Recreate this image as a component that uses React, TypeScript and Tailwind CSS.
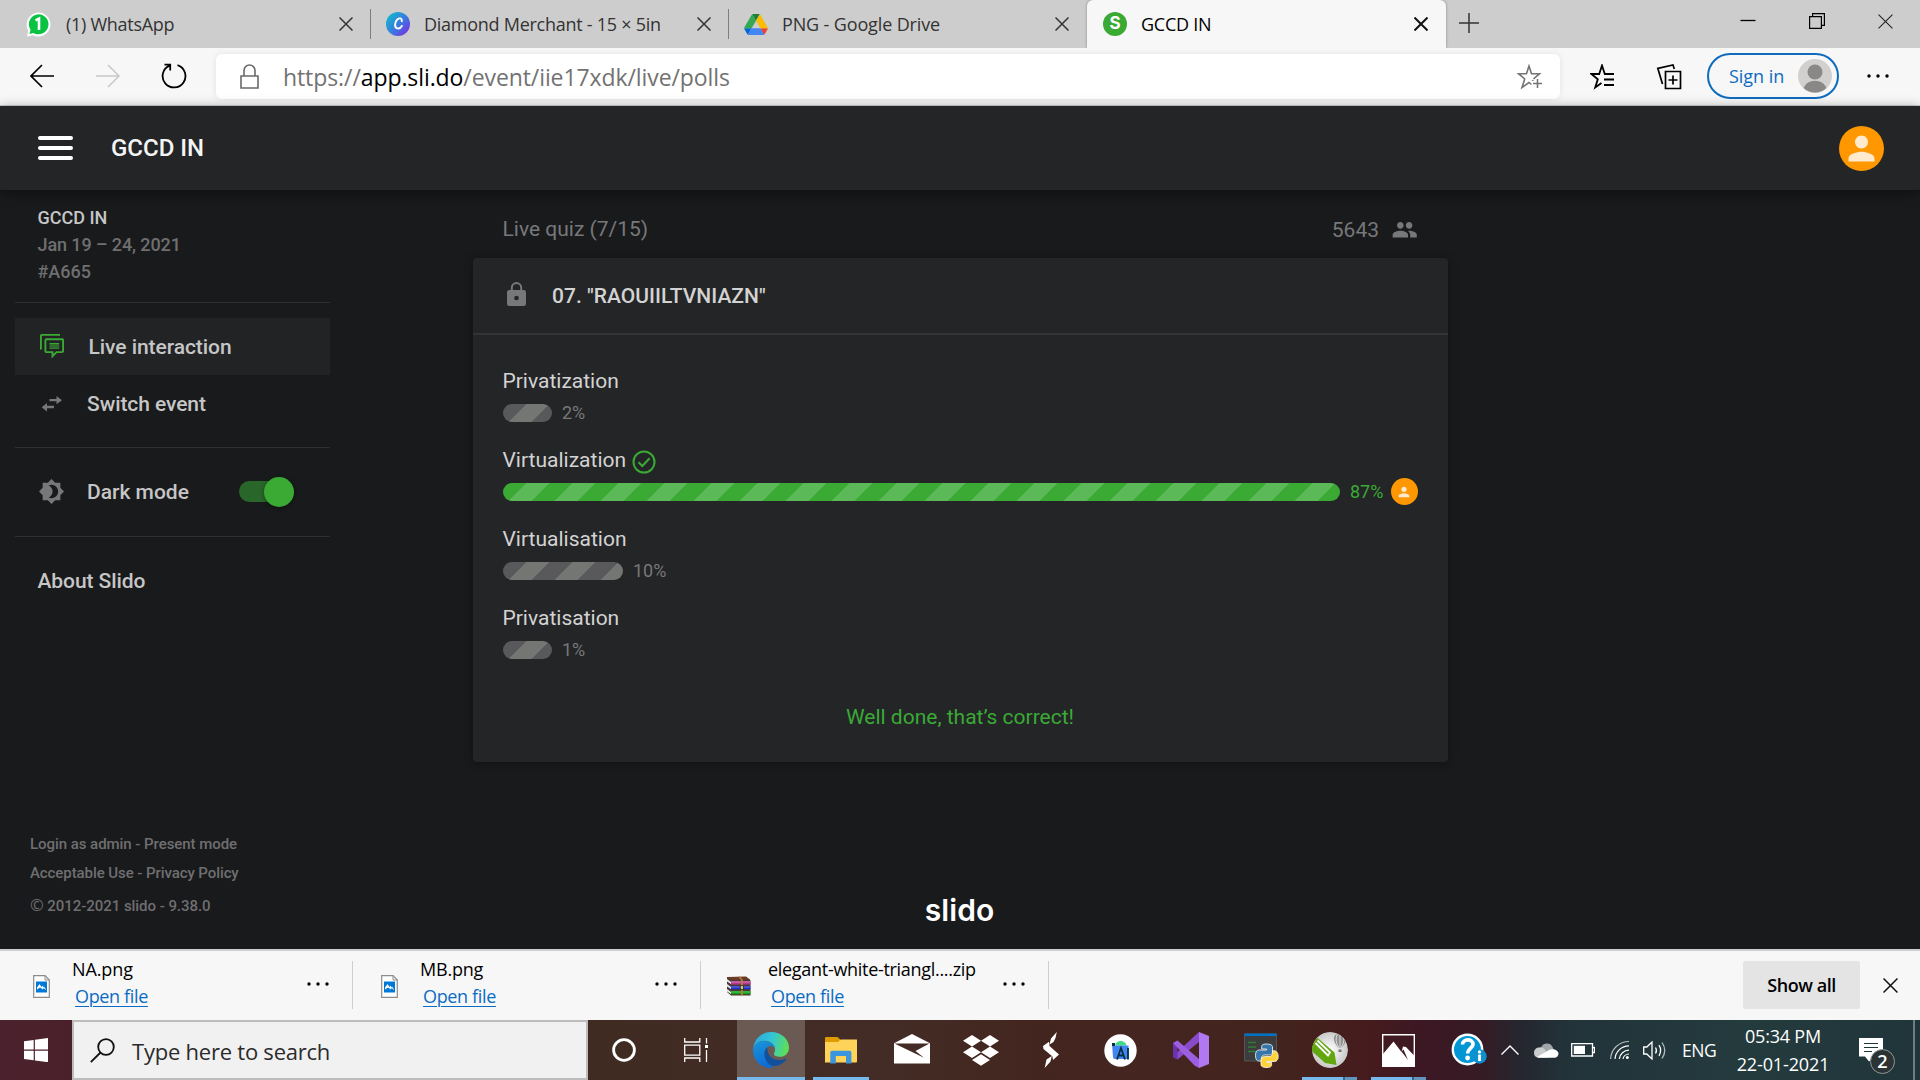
import React from "react";

type Kids = { children?: React.ReactNode };

function Close({ size = 14, w = 1.5, color = "#333" }: { size?: number; w?: number; color?: string }) {
  return (
    <svg width={size} height={size} viewBox="0 0 14 14" fill="none" stroke={color} strokeWidth={w}>
      <path d="M0.5 0.5 13.5 13.5M13.5 0.5 0.5 13.5" />
    </svg>
  );
}

function Dots() {
  return (
    <svg width="22" height="4" viewBox="0 0 22 4" fill="#000">
      <circle cx="2" cy="2" r="1.7" />
      <circle cx="11" cy="2" r="1.7" />
      <circle cx="20" cy="2" r="1.7" />
    </svg>
  );
}

function Person({ size }: { size: number }) {
  return (
    <svg width={size} height={size} viewBox="0 0 24 24" fill="#ffeace">
      <path d="M12 12c2.21 0 4-1.79 4-4s-1.79-4-4-4-4 1.79-4 4 1.79 4 4 4zm0 2c-2.67 0-8 1.34-8 4v2h16v-2c0-2.66-5.33-4-8-4z" />
    </svg>
  );
}

function TabBar() {
  return (
    <div className="flex h-12 items-stretch bg-[#cdcdcd] font-['Open_Sans',sans-serif] text-[18px] text-[#333]">
      <div className="flex h-12 w-[370px] items-center pl-[26px]">
        <svg width="25" height="25" viewBox="0 0 25 25">
          <path d="M12.5 0.5A12 12 0 1 1 7 23.200L1 24.500 2.200 18.500A12 12 0 0 1 12.500 0.500z" fill="#fff" />
          <path d="M12.700 2.300a10 10 0 1 1-5.300 18.600L3.500 22l1-4.300A10 10 0 0 1 12.700 2.300z" fill="#0ac242" />
          <path d="M9.500 8.300 13 6.600V18" fill="none" stroke="#fff" strokeWidth="2.600" />
        </svg>
        <span className="ml-[15px] tracking-[-0.28px]">(1) WhatsApp</span>
        <span className="ml-auto mr-[17px]"><Close /></span>
      </div>
      <div className="my-auto h-[30px] w-px bg-[#7d7d7d]" />
      <div className="flex h-12 w-[357px] items-center pl-[15px]">
        <svg width="24" height="24" viewBox="0 0 24 24">
          <defs>
            <linearGradient id="cv" x1="0.1" y1="0.2" x2="0.9" y2="0.9">
              <stop offset="0" stopColor="#14b2cf" />
              <stop offset="0.5" stopColor="#3a7be0" />
              <stop offset="1" stopColor="#7334e2" />
            </linearGradient>
          </defs>
          <circle cx="12" cy="12" r="12" fill="url(#cv)" />
          <path d="M15.800 9.200c.3-3-2.300-3.700-4.500-1.700-2.600 2.400-3.400 8 .1 8.900 1.900.4 3.700-.9 4.500-2.500" fill="none" stroke="#fff" strokeWidth="1.900" strokeLinecap="round" />
        </svg>
        <span className="ml-[14px] tracking-[-0.26px]">Diamond Merchant - 15 × 5in</span>
        <span className="ml-auto mr-[17px]"><Close /></span>
      </div>
      <div className="my-auto h-[30px] w-px bg-[#7d7d7d]" />
      <div className="flex h-12 w-[358px] items-center rounded-br-md pl-[15px]">
        <svg width="24" height="21" viewBox="0 0 87.300 78">
          <path d="m6.600 66.850 3.850 6.650c.8 1.400 1.950 2.500 3.300 3.300l13.750-23.800h-27.500c0 1.550.4 3.100 1.200 4.500z" fill="#0066da" />
          <path d="m43.650 25-13.750-23.800c-1.350.8-2.500 1.900-3.300 3.300l-25.400 44a9.060 9.060 0 0 0 -1.200 4.500h27.500z" fill="#34a853" />
          <path d="m73.550 76.800c1.350-.8 2.500-1.900 3.300-3.300l1.600-2.750 7.650-13.250c.8-1.400 1.200-2.950 1.200-4.500h-27.502l5.852 11.500z" fill="#ea4335" />
          <path d="m43.650 25 13.750-23.800c-1.350-.8-2.900-1.200-4.500-1.200h-18.500c-1.600 0-3.150.45-4.500 1.200z" fill="#188038" />
          <path d="m59.800 53h-32.300l-13.750 23.800c1.350.8 2.900 1.200 4.500 1.200h50.800c1.600 0 3.150-.45 4.500-1.200z" fill="#4285f4" />
          <path d="m73.400 26.500-12.700-22c-.8-1.400-1.950-2.500-3.300-3.300l-13.750 23.800 16.150 28h27.450c0-1.550-.4-3.100-1.200-4.500z" fill="#fbbc04" />
        </svg>
        <span className="ml-[14px] tracking-[-0.14px]">PNG - Google Drive</span>
        <span className="ml-auto mr-[18px]"><Close /></span>
      </div>
      <div className="flex h-12 w-[359px] items-center rounded-t-md bg-[#f7f7f7] pl-4 text-black shadow-[0_0_3px_rgba(0,0,0,0.35)] [clip-path:inset(0_-4px_0_-4px)]">
        <div className="flex size-6 items-center justify-center rounded-full bg-[#3aaa35] font-['Inter',sans-serif] text-[17px] font-bold text-white">S</div>
        <span className="ml-[14px] tracking-[-0.25px]">GCCD IN</span>
        <span className="ml-auto mr-[18px]"><Close w={2} color="#111" /></span>
      </div>
      <div className="flex w-[46px] items-center justify-center pb-0.5">
        <svg width="20" height="20" viewBox="0 0 20 20" stroke="#333" strokeWidth="1.500"><path d="M0 10H20M10 0V20" /></svg>
      </div>
      <div className="ml-auto flex items-center gap-[53px] pb-[6px] pr-[27px]">
        <svg width="16" height="16" viewBox="0 0 16 16" stroke="#000" strokeWidth="1.300"><path d="M0.500 7.500H15.500" /></svg>
        <svg width="16" height="16" viewBox="0 0 16 16" fill="none" stroke="#000" strokeWidth="1.200">
          <path d="M0.600 3.600H12.400V15.400H0.600zM3.600 3.600V0.600H15.400V12.400H12.400" />
        </svg>
        <Close size={15} w={1} color="#222" />
      </div>
    </div>
  );
}

function Toolbar() {
  return (
    <div className="flex h-[58px] items-center border-b border-[#cfcfcf] bg-[#f7f7f7] font-['Open_Sans',sans-serif]">
      <svg className="-mt-0.5 ml-[30px]" width="24" height="24" viewBox="0 0 24 24" fill="none" stroke="#000" strokeWidth="1.700"><path d="M24 12H1M12 1 1 12 12 23" /></svg>
      <svg className="-mt-0.5 ml-[42px]" width="24" height="24" viewBox="0 0 24 24" fill="none" stroke="#c8c8c8" strokeWidth="1.500"><path d="M0 12H23M12 1 23 12 12 23" /></svg>
      <svg className="-mt-0.5 ml-[41px]" width="26" height="26" viewBox="0 0 26 26" fill="none" stroke="#000" strokeWidth="1.800">
        <path d="M16.500 2.200A11.400 11.400 0 1 1 8.500 2.600M3.500 1.600H9.200V7.600" />
      </svg>
      <div className="ml-[29px] flex h-[45px] w-[1344px] items-center rounded-[6px] bg-white pl-6 pr-[17px] shadow-[0_0_6px_rgba(0,0,0,0.09)]">
        <svg width="19" height="25" viewBox="0 0 19 25" fill="none" stroke="#6a6a6a" strokeWidth="1.600">
          <path d="M1 12H18V24H1zM4 12V6.500a5.500 5.500 0 0 1 11 0V12" />
        </svg>
        <span className="ml-6 mt-0.5 whitespace-nowrap text-[23px] tracking-[-0.09px] text-[#727272]">
          https://<span className="text-black">app.sli.do</span>/event/iie17xdk/live/polls
        </span>
        <svg className="ml-auto" width="26" height="26" viewBox="0 0 26 26" fill="none" stroke="#757575" strokeWidth="1.600">
          <path d="M15.500 16 16 17M14.500 20.500 12 18.500 5 23.500 7.700 15 1.500 9.700H9.500L12 2 14.500 9.700H22.500L16.500 15M20.500 15V24M16 19.500H25" />
        </svg>
      </div>
      <svg className="ml-[30px]" width="26" height="26" viewBox="0 0 26 26" fill="none" stroke="#000" strokeWidth="1.800">
        <path d="M24 10H14.800L12 1.500 9.200 10H1.500L7.800 15.200 5.200 23.500 11.500 19M14 15.500H24M14 21H24" />
      </svg>
      <svg className="ml-10" width="26" height="26" viewBox="0 0 26 26" fill="none" stroke="#000" strokeWidth="1.700">
        <path d="M9.500 7.500H24.500V24.500H9.500zM17 11.500V20.500M12.500 16H21.500M6.500 20 1.800 4.300 17 1 18.300 5" />
      </svg>
      <div className="-mt-px ml-[25px] flex h-[46px] w-[132px] items-center rounded-full border-2 border-[#0f6cbd] pl-5 text-[18px] text-[#0f6cbd]">
        <span className="tracking-[-0.05px]">Sign in</span>
        <svg className="ml-auto mr-[5px]" width="34" height="34" viewBox="0 0 34 34">
          <defs><clipPath id="av"><circle cx="17" cy="17" r="16.500" /></clipPath></defs>
          <circle cx="17" cy="17" r="17" fill="#d2d0ce" />
          <g clipPath="url(#av)" fill="#8a8886">
            <circle cx="17" cy="13" r="7.500" />
            <path d="M5 33C5 18 29 18 29 33V34H5z" />
          </g>
        </svg>
      </div>
      <span className="-mt-0.5 ml-[28px] flex"><Dots /></span>
    </div>
  );
}

function Rule() {
  return <div className="h-px w-[315px] bg-[#2e2f31]" />;
}

function Sidebar() {
  return (
    <aside className="flex w-[473px] flex-col pl-[15px] font-['Roboto',sans-serif] font-medium text-[#c6c6c6]">
      <div className="mt-[14px] pl-[22.500px] text-[18px] leading-[27px]">
        <div>GCCD IN</div>
        <div className="tracking-[-0.1px] text-[#6f6f70]">Jan 19 – 24, 2021</div>
        <div className="text-[#6f6f70]">#A665</div>
      </div>
      <div className="mt-[17px]"><Rule /></div>
      <div className="mt-[15px] flex h-[57px] w-[315px] items-center bg-[#222325] pl-[25px] text-[21px]">
        <svg className="-mt-0.5" width="24" height="24" viewBox="0 0 24 24" fill="none" stroke="#3aaa35" strokeWidth="1.900">
          <path d="M0.900 15.500V1.900q0-1 1-1H20" />
          <path d="M6.500 5.300H22q1.100 0 1.100 1.100V17q0 1.100-1.100 1.100H16.500L12.500 22.200V18.100H6.500q-1.100 0-1.100-1.100V6.400q0-1.100 1.100-1.100z" />
          <path d="M9.500 9.500H19.200M9.500 14.200H19.200" strokeWidth="1" />
          <path d="M9.500 11.800H19.200" strokeWidth="3.600" strokeOpacity="0.550" />
        </svg>
        <span className="ml-[24.500px] mt-0.5 tracking-[-0.06px]">Live interaction</span>
      </div>
      <div className="flex h-[57px] w-[315px] items-center pl-[26px] text-[21px]">
        <svg width="22" height="16" viewBox="0 0 22 16" fill="#77787a">
          <path d="M8.500 3.100H15.500V0L21 4.200 15.500 8.300V5.300H8.500zM13 9.700H6V7L0.700 11.300 6 15.500V12.200H13z" />
        </svg>
        <span className="ml-[24px] mt-0.5 tracking-[-0.08px]">Switch event</span>
      </div>
      <div className="mt-[15px]"><Rule /></div>
      <div className="mt-[15px] flex h-[57px] w-[315px] items-center pl-6 text-[21px]">
        <svg width="25" height="25" viewBox="0.700 0.700 22.600 22.600" fill="#77787a">
          <path fillRule="evenodd" d="M20 8.690V4h-4.690L12 .69 8.690 4H4v4.690L.69 12 4 15.310V20h4.690L12 23.310 15.310 20H20v-4.690L23.310 12 20 8.690zM12 18c-.89 0-1.740-.2-2.500-.55C11.560 16.500 13 14.420 13 12s-1.440-4.500-3.500-5.450C10.260 6.200 11.110 6 12 6c3.310 0 6 2.690 6 6s-2.690 6-6 6z" />
        </svg>
        <span className="ml-[23px] mt-0.5">Dark mode</span>
        <div className="ml-auto mr-9 flex h-[21px] w-[55px] items-center justify-end rounded-full bg-[#296629]">
          <div className="size-[30px] shrink-0 rounded-full bg-[#3aaa35] shadow-[0_1px_4px_rgba(0,0,0,0.4)]" />
        </div>
      </div>
      <div className="mt-4"><Rule /></div>
      <div className="mt-[28px] pl-[22.500px] text-[21px] leading-[32px] tracking-[-0.08px]">About Slido</div>
      <div className="mb-[31px] mt-auto pl-[15px] text-[15px] leading-[24px] tracking-[-0.05px] text-[#6f6f70]">
        <div>Login as admin - Present mode</div>
        <div className="mt-[5px] tracking-[-0.08px]">Acceptable Use - Privacy Policy</div>
        <div className="mt-[9px]"><span className="font-['Open_Sans',sans-serif] text-[16.500px] font-normal leading-none">©</span> 2012-2021 slido - 9.38.0</div>
      </div>
    </aside>
  );
}

function Option({ label, pct, width, correct }: { label: string; pct: string; width: number; correct?: boolean }) {
  return (
    <div className="h-[79px]">
      <div className="flex h-8 items-center text-[21px] text-[#d3d3d3]">
        <span className="mt-[3px]">{label}</span>
        {correct && (
          <svg className="ml-[6px] mt-[5px]" width="24" height="24" viewBox="0 0 24 24" fill="none" stroke="#3aaa35" strokeWidth="2">
            <circle cx="12" cy="12" r="10.500" />
            <path d="M6.500 12.300 10.300 16 17.600 8.200" />
          </svg>
        )}
      </div>
      <div className="mt-[3px] flex h-[27px] items-center">
        <div
          className={
            correct
              ? "h-[18px] rounded-full bg-[repeating-linear-gradient(135deg,#3aaa35_0px,#3aaa35_16.35px,#5bba57_16.35px,#5bba57_32.7px)]"
              : "h-[18px] rounded-full bg-[repeating-linear-gradient(135deg,#59595b_0px,#59595b_16.35px,#747674_16.35px,#747674_32.7px)]"
          }
          style={{ width }}
        />
        <span className={correct ? "ml-[10.500px] text-[18px] text-[#3aaa35]" : "ml-[10.500px] text-[18px] text-[#77787a]"}>{pct}</span>
        {correct && (
          <div className="ml-[7.500px] flex size-[27px] items-center justify-center rounded-full bg-[#ff9800]">
            <Person size={16} />
          </div>
        )}
      </div>
    </div>
  );
}

function Poll() {
  return (
    <main className="flex w-[975px] flex-col font-['Roboto',sans-serif]">
      <div className="mt-6 flex h-8 items-center justify-between pl-[29.500px] pr-[30px] text-[21px] text-[#77787a]">
        <span>Live quiz (7/15)</span>
        <div className="flex items-center gap-[13px]">
          <span className="mt-px">5643</span>
          <svg className="-mt-px" width="26" height="17" viewBox="0.500 4 23.500 15.500" fill="#77787a">
            <path d="M16 11c1.660 0 2.990-1.340 2.990-3S17.660 5 16 5s-3 1.340-3 3 1.340 3 3 3zm-8 0c1.660 0 2.990-1.340 2.990-3S9.660 5 8 5 5 6.340 5 8s1.340 3 3 3zm0 2c-2.330 0-7 1.170-7 3.500V19h14v-2.500c0-2.330-4.670-3.500-7-3.500zm8 0c-.29 0-.62.020-.97.050 1.160.84 1.970 1.970 1.970 3.450V19h6v-2.500c0-2.330-4.670-3.500-7-3.500z" />
          </svg>
        </div>
      </div>
      <section className="mt-3 h-[504px] rounded-[4px] bg-[#242527] shadow-[0_1px_8px_rgba(0,0,0,0.35)]">
        <div className="flex h-[77px] items-center border-b-2 border-[#333436] pl-[34px]">
          <svg className="-mt-[3px]" width="19" height="24" viewBox="0 0 19 24" fill="#77787a">
            <path fillRule="evenodd" d="M2.300 8H3.800V5.700a5.700 5.700 0 0 1 11.400 0V8h1.500A2.300 2.300 0 0 1 19 10.300V21.700A2.300 2.300 0 0 1 16.700 24H2.300A2.300 2.300 0 0 1 0 21.700V10.300A2.300 2.300 0 0 1 2.300 8zM5.800 8h7.400V5.700a3.700 3.700 0 0 0-7.400 0zM9.500 13.700a2.300 2.300 0 1 0 0 4.600a2.300 2.300 0 0 0 0-4.600z" />
          </svg>
          <span className="ml-[26px] mt-0.5 text-[21px] font-medium tracking-[0.02px] text-[#d3d3d3]">07. "RAOUIILTVNIAZN"</span>
        </div>
        <div className="pl-[29.500px] pt-[29px]">
          <Option label="Privatization" pct="2%" width={49} />
          <Option label="Virtualization" pct="87%" width={837} correct />
          <Option label="Virtualisation" pct="10%" width={120} />
          <Option label="Privatisation" pct="1%" width={49} />
        </div>
        <div className="mt-[21px] pr-px text-center text-[21px] leading-8 text-[#3aaa35]">Well done, that’s correct!</div>
      </section>
      <div className="mb-[19px] mt-auto pr-0.5 text-center font-['Inter',sans-serif] text-[30px] font-semibold leading-[40px] tracking-[0.1px] text-white">slido</div>
    </main>
  );
}

function Download({ name, icon, cls }: { name: string; icon: React.ReactNode; cls?: string }) {
  return (
    <div className="flex h-full items-center">
      <div className="flex w-[72px] justify-start pl-[33px] pt-0.5">{icon}</div>
      <div className="-mt-[5px] w-[235px] text-[18px] leading-[27px]">
        <div className={cls}>{name}</div>
        <div className="pl-[3px]"><span className="tracking-[-0.35px] text-[#0b6cc4] underline decoration-1 underline-offset-[3px]">Open file</span></div>
      </div>
      <span className="-mt-0.5 flex"><Dots /></span>
      <div className="ml-[23px] h-12 w-px bg-[#cfcfcf]" />
    </div>
  );
}

function ImageFile() {
  return (
    <svg width="17" height="23" viewBox="0 0 17 23">
      <path d="M0.700 0.700H12L16.300 5V22.300H0.700z" fill="#fff" stroke="#8c8c8c" strokeWidth="1.200" />
      <path d="M12 0.700V5H16.300" fill="none" stroke="#8c8c8c" />
      <path d="M3 6.500H14V17.500H3z" fill="#0078d7" />
      <path d="M4 14.500V12.500L6.500 9 8.500 12 10 10.500V12.500L11 11.500 13 14.500V15L10.500 13 10 14.500 7 12.500z" fill="#fff" />
    </svg>
  );
}

function ZipFile() {
  return (
    <svg className="-ml-[3px]" width="25" height="20" viewBox="0 0 25 20">
      <path d="M1 1H20L24.500 4.500V19.500H5L1 16z" fill="#4a3a34" />
      <path d="M1 1 20 0.500 24.500 4H5z" fill="#6b3a28" />
      <path d="M5 5H24.500V8.500H5z" fill="#b8388f" />
      <path d="M5 10H24.500V13.200H5z" fill="#1c2fd0" />
      <path d="M5 15H24.500V18.200H5z" fill="#12a016" />
      <path d="M5 6H24.500M5 11H24.500M5 16H24.500" stroke="#fff" strokeOpacity="0.350" />
      <path d="M1 3 5 6V8L1 5.500zM1 8 5 11V13L1 10.500zM1 13 5 16V18L1 15.500z" fill="#e8e8e8" />
      <path d="M12 0.500 15 4V19.500H16.800V4L14 0.500z" fill="#b5803a" />
      <path d="M14.300 9.500H17.500V13.500H14.300z" fill="#e0c070" stroke="#222" strokeWidth="0.800" />
    </svg>
  );
}

function Downloads() {
  return (
    <div className="flex h-[71px] items-center border-t-2 border-[#cfcfcf] bg-[#f7f7f7] pb-px font-['Open_Sans',sans-serif] text-black">
      <Download name="NA.png" icon={<ImageFile />} cls="tracking-[-0.1px]" />
      <div className="-ml-[5px]"><Download name="MB.png" icon={<ImageFile />} cls="tracking-[-0.2px]" /></div>
      <div className="-ml-[5px]"><Download name="elegant-white-triangl....zip" icon={<ZipFile />} cls="tracking-[-0.3px]" /></div>
      <div className="ml-auto flex h-12 w-[117px] items-center justify-center rounded-[2px] bg-[#e4e4e4] text-[18px] font-semibold tracking-[-0.45px]">Show all</div>
      <span className="ml-[23px] mr-[22px] flex"><Close size={15} w={1.4} color="#111" /></span>
    </div>
  );
}

function Task({ children }: Kids) {
  return <div className="flex h-[60px] w-[70px] items-center justify-center">{children}</div>;
}

function Taskbar() {
  return (
    <div className="flex h-[60px] items-center bg-[linear-gradient(90deg,#4b212d_0px,#4a212b_72px,#402b23_588px,#432c25_900px,#43251f_1040px,#45251f_1150px,#43231d_1290px,#461b1d_1370px,#3c1824_1420px,#361b24_1480px,#25262f_1520px,#22333a_1570px,#243b3e_1750px,#20353a_1920px)] font-['Open_Sans',sans-serif] text-white">
      <div className="flex h-full w-[72px] items-center justify-center">
        <svg width="24" height="24" viewBox="0 0 24 24" fill="#fff">
          <path d="M0 3.300 9.700 2V11.500H0zM10.900 1.800 24 0V11.500H10.900zM0 12.700H9.700V22.200L0 20.900zM10.900 12.700H24V24.200L10.900 22.400z" />
        </svg>
      </div>
      <div className="flex h-[60px] w-[516px] items-center border-2 border-[#bcbcbc] bg-[#f1f1f1] pl-4 text-[22px] text-[#2b2b2b]">
        <svg width="25" height="25" viewBox="0 0 25 25" fill="none" stroke="#111" strokeWidth="1.800">
          <circle cx="16" cy="9" r="7.800" />
          <path d="M10.500 14.500 0.800 24.200" />
        </svg>
        <span className="ml-[17px] mt-0.5 tracking-[-0.23px]">Type here to search</span>
      </div>
      <div className="flex h-full w-[71px] items-center justify-center">
        <svg width="26" height="26" viewBox="0 0 26 26" fill="none" stroke="#fff" strokeWidth="2.800"><circle cx="13" cy="13" r="10.400" /></svg>
      </div>
      <div className="flex h-full w-[78px] items-center justify-start pl-[25px]">
        <svg width="25" height="24" viewBox="0 0 25 24" fill="none" stroke="#fff" strokeWidth="1.300">
          <path d="M0.700 0V4H15.800V0M0.700 7.200H15.800V17.200H0.700zM0.700 24V20H15.800V24M22.500 0V5.500M22.500 12V24" />
          <path d="M21 7H24V10H21z" fill="#fff" stroke="none" />
        </svg>
      </div>
      <div className="flex h-full w-[68px] items-center justify-center border-b-[3px] border-[#76b9ed] bg-[#6b5a53]">
        <svg className="mt-[3px]" width="36" height="36" viewBox="0 0 36 36">
          <defs>
            <linearGradient id="e1" x1="0" y1="0.300" x2="1" y2="0.500">
              <stop offset="0" stopColor="#2ba9e1" />
              <stop offset="0.500" stopColor="#33c6d5" />
              <stop offset="1" stopColor="#5fdf52" />
            </linearGradient>
            <linearGradient id="e2" x1="0" y1="0" x2="0.300" y2="1">
              <stop offset="0" stopColor="#1a97d8" />
              <stop offset="1" stopColor="#0d6cd6" />
            </linearGradient>
          </defs>
          <path d="M0.300 16C1.500 6.500 9 0 18 0 28.500 0 36 7.500 36 15.500 36 21.500 31.500 24.800 27 24.800 22.500 24.800 20.500 23 21 21.500 21.500 20 22.300 19 22 17 21.500 12 16.500 8.700 11 8.700 6 8.700 2 12 0.300 16z" fill="url(#e1)" />
          <path d="M0.300 16C2 11.500 6 9 11 9 17 9 21.500 12.500 22 16.500 20.500 14 17.500 13.500 15.500 14.500 11.500 16.500 10.500 22 13 27 15.500 32 20 35.500 21 35.700 10 37.500 -1.500 29 0.300 16z" fill="url(#e2)" />
          <path d="M14.500 15.200C9.500 19 11 27.500 16 32 21 36.500 29.500 33 33.300 27.300 33.600 26.700 33 26.300 32.500 26.600 24 31 13 25.500 14.500 15.200z" fill="#12509e" />
        </svg>
      </div>
      <div className="flex h-full w-[72px] justify-center">
        <div className="flex h-full w-14 items-center justify-center border-b-[3px] border-[#76b9ed]">
          <svg className="mt-[3px]" width="32" height="27" viewBox="0 0 32 27">
            <path d="M0 1.200Q0 0 1.200 0H12.500L15 2.300V6H0z" fill="#e09b00" />
            <path d="M0 5H13L15.500 2.500H32V24.500Q32 25.500 31 25.500H0z" fill="#ffd35a" />
            <path d="M5.300 15.500Q5.300 13.700 7 13.700H24.700Q26.400 13.700 26.400 15.500V26.500H21V19H10.800V26.500H5.300z" fill="#3a96dd" />
          </svg>
        </div>
      </div>
      <div className="flex w-[69px] justify-center">
        <svg className="-mt-0.5" width="36" height="30" viewBox="0 0 36 30">
          <path d="M0 9.200 18 0 36 9.200V29.500H0z" fill="#fff" />
          <path d="M0.500 9.400H35.500L21.500 17 30 23.700 3.500 11z" fill="#432c25" />
        </svg>
      </div>
      <Task>
        <svg width="36" height="31" viewBox="0 0 36 31" fill="#fff">
          <path d="M9 0 18 5.800 9 11.500 0 5.800zM27 0 36 5.800 27 11.500 18 5.800zM9 11.500 18 17.300 9 23 0 17.300zM27 11.500 36 17.300 27 23 18 17.300zM18 19.300 27 25 18 30.700 9 25z" />
        </svg>
      </Task>
      <Task>
        <svg width="18" height="36" viewBox="0 0 18 36" fill="#fff">
          <path d="M14.800 0 9 6.500 7.500 12.500 11.500 10 13.500 6zM1 14 7 9.800 7.500 14 17 22.500 11 28 10.500 24.500 1.500 17zM2.700 36 8.500 29.500 9.800 24 4.500 27.500z" />
        </svg>
      </Task>
      <Task>
        <svg className="-ml-px" width="33" height="33" viewBox="0 0 33 33">
          <circle cx="16.500" cy="16.500" r="16.200" fill="#fff" />
          <path d="M11 11.500C12 5.500 21.500 5.500 22.500 11.500z" fill="#3ddc84" />
          <path d="M8 9.500H11V11.500H24.500V25H11Q9 25 9 23z" fill="#4285f4" />
          <path d="M13 25.500 17 14 21 25.500M14.500 21.500H19.500M24 14V25.500" fill="none" stroke="#073042" strokeWidth="1.800" />
          <path d="M8 9H11V12H8z" fill="#073042" />
        </svg>
      </Task>
      <Task>
        <svg width="36" height="36" viewBox="0 0 36 36">
          <path d="M26 0 36 4V32L26 36z" fill="#b179f1" />
          <path d="M26 0V10L4.500 27.500 0 25 4.500 20 21 4.500z" fill="#8a4bcb" />
          <path d="M0 11 4.500 8.500V27.500L0 25z" fill="#6c33af" />
          <path d="M4.500 8.500 0 11 21.500 33.500 26 36V27z" fill="#9b5fe0" />
        </svg>
      </Task>
      <Task>
        <svg width="35" height="35" viewBox="0 0 35 35">
          <path d="M0.500 1H32.500V28H0.500z" fill="#3d3d3d" stroke="#55605f" strokeWidth="0.800" />
          <path d="M0.500 0.500H32.500V3H0.500z" fill="#0072c6" />
          <path d="M4 9.500H12M4 14H12M4 18.500H12" stroke="#2f7d36" strokeWidth="1.300" />
          <path d="M22.300 11C17.500 11 17.700 13.200 17.700 13.200V16H22.500V17H15.200S11.500 16.500 11.500 22.500 15 28 15 28H17.500V25.300S17.300 22 20.700 22H25.500S28.500 22 28.500 19V14S29 11 22.300 11z" fill="#3776ab" stroke="#fff" strokeWidth="0.800" />
          <path d="M23 34.500C27.800 34.500 27.600 32.300 27.600 32.300V29.500H22.800V28.500H30S34.200 29 34.200 23.500 30.500 17.800 30.500 17.800H28.500V20.500S28.300 23.600 25 23.600H20.500S17 23.600 17 26.500V31.500S16.500 34.500 23 34.500z" fill="#ffd43b" stroke="#fff" strokeWidth="0.800" />
        </svg>
      </Task>
      <div className="relative ml-[6px] flex h-full w-[55px] items-center justify-center">
        <svg width="36" height="36" viewBox="0 0 36 36">
          <defs>
            <radialGradient id="cd"><stop offset="0" stopColor="#fff" /><stop offset="1" stopColor="#c9c9c9" /></radialGradient>
            <clipPath id="cc"><circle cx="18" cy="18" r="18" /></clipPath>
          </defs>
          <g clipPath="url(#cc)">
            <circle cx="18" cy="18" r="18" fill="url(#cd)" />
            <path d="M5 5.500 22.500 20.500 24.500 33 13 31-2 17.500z" fill="#62a70f" />
            <path d="M3.500 11 16 23.500 18 20.500 5.500 8.500" fill="none" stroke="#fff" strokeWidth="1.800" />
            <path d="M28 1.500C20 1.500 20 9 26.500 16H29.500C36 9 36 1.500 28 1.500z" fill="#909090" />
            <path d="M25.500 2Q22 8 27 16M30.500 2Q34 8 29 16M28 2V16" fill="none" stroke="#e5e5e5" strokeWidth="0.900" />
            <path d="M26.500 17.500H29.500V20H26.500z" fill="#777" />
          </g>
        </svg>
        <div className="absolute bottom-0 left-0 flex h-[3px] w-full"><div className="w-[41px] bg-[#76b9ed]" /><div className="flex-1 border-l-2 border-[#3f6585] bg-[#6195bd]" /></div>
      </div>
      <div className="relative ml-[14px] flex h-full w-[55px] items-center justify-center">
        <svg width="33" height="33" viewBox="0 0 33 33">
          <path d="M0.700 0.700H32.300V32.300H0.700z" fill="none" stroke="#fff" strokeWidth="1.400" />
          <path d="M1 20 11.500 7.500 19.500 18 21 12.500 24 13 32.500 22V32.500H1z" fill="#fff" />
          <path d="M19.500 17.500 26 26 21.500 15.500z" fill="#401a22" />
        </svg>
        <div className="absolute bottom-0 left-0 flex h-[3px] w-full"><div className="w-[41px] bg-[#76b9ed]" /><div className="flex-1 border-l-2 border-[#3f6585] bg-[#6195bd]" /></div>
      </div>
      <svg className="ml-[25px]" width="36" height="34" viewBox="0 0 36 34">
        <circle cx="16.500" cy="16.500" r="14.700" fill="#0096d6" stroke="#fff" strokeWidth="2.400" />
        <path d="M11.500 11.500C11.500 5.500 22 5.300 22 11.200 22 15 16.600 15.500 16.600 20.500" fill="none" stroke="#fff" strokeWidth="3.700" />
        <circle cx="16.600" cy="25" r="2.400" fill="#fff" />
        <circle cx="28.500" cy="23.500" r="7.200" fill="#0e8fd0" />
        <path d="M28.500 21.500V28" stroke="#fff" strokeWidth="2.800" />
        <circle cx="28.500" cy="18.900" r="1.600" fill="#fff" />
      </svg>
      <svg className="ml-[14px]" width="18" height="10" viewBox="0 0 18 10" fill="none" stroke="#fff" strokeWidth="1.400"><path d="M0.500 9.500 9 1 17.500 9.500" /></svg>
      <svg className="ml-[15px]" width="25" height="16" viewBox="0 0 25 16">
        <path d="M7 6A6.200 6.200 0 0 1 18.500 5L21 10H4z" fill="#9fa6a8" />
        <path d="M0 10.500A5 5 0 0 1 5 5.500Q8 4.500 11 7.500L14 15.500H4.500Q0 15.500 0 10.500z" fill="#c9cdce" />
        <path d="M3 15 16 7.500Q22.500 6 24.500 11 24.500 15.700 20 15.700H4.500z" fill="#fff" />
      </svg>
      <svg className="ml-3" width="24" height="14" viewBox="0 0 24 14">
        <path d="M0.700 0.700H21.500V13H0.700zM22 4.500H23.500V9.500H22" fill="none" stroke="#fff" strokeWidth="1.300" />
        <path d="M2.800 2.800H14V11H2.800z" fill="#fff" />
      </svg>
      <svg className="ml-[15px]" width="20" height="20" viewBox="0 0 20 20" fill="none" stroke="#fff" strokeWidth="1.200">
        <path d="M0.600 19A18.300 18.300 0 0 1 19 1.500" stroke="#b4bdbe" />
        <path d="M5 19A14 14 0 0 1 19 5.800M9.300 19A9.700 9.700 0 0 1 19 10.200M13 19A6 6 0 0 1 19 14" />
        <circle cx="17.300" cy="17.500" r="1.500" fill="#fff" stroke="none" />
      </svg>
      <svg className="ml-[13px]" width="23" height="19" viewBox="0 0 23 19" fill="none" stroke="#fff" strokeWidth="1.300">
        <path d="M0.700 6H3.800L9 1V18L3.800 13H0.700z" />
        <path d="M12.500 6.500Q14.500 9.500 12.500 12.500M16 4.200Q19.300 9.500 16 14.800" />
        <path d="M19 1.500Q24.500 9.500 19 17.500" stroke="#b4bdbe" />
      </svg>
      <span className="ml-4 w-[36px] whitespace-nowrap text-[17.500px] tracking-[-0.5px]">ENG</span>
      <div className="ml-[17px] w-[96px] whitespace-nowrap text-center text-[18px] leading-[28px]">
        <div className="tracking-[-0.2px]">05:34 PM</div>
        <div className="tracking-[-0.12px]">22-01-2021</div>
      </div>
      <div className="relative ml-[28px] h-[60px] w-[38px]">
        <svg className="mt-[18px]" width="24" height="24" viewBox="0 0 24 24">
          <path d="M0 0H24V18.500H15L10 23.500 6 18.500H0z" fill="#fff" />
          <path d="M5 5.500H19M5 9.500H19M5 13.500H13" stroke="#22373b" strokeWidth="1.200" />
        </svg>
        <div className="absolute left-[11px] top-[29px] flex size-[25px] items-center justify-center rounded-full border border-[#8f9798] bg-[#2c3335] pb-0.5 text-[18px] font-semibold leading-none">2</div>
      </div>
      <div className="ml-auto h-full w-[7px] border-l-2 border-[#6e7d80]" />
    </div>
  );
}

export default function App() {
  return (
    <div className="flex h-[1080px] w-[1920px] flex-col overflow-hidden bg-[#191a1c]">
      <TabBar />
      <Toolbar />
      <header className="z-10 flex h-[84px] items-center bg-[#242527] pl-[38px] pr-9 font-['Roboto',sans-serif] shadow-[0_3px_12px_rgba(0,0,0,0.45)]">
        <div className="flex w-[35px] flex-col gap-[5.500px]">
          <div className="h-[4.500px] rounded-full bg-white" />
          <div className="h-[4.500px] rounded-full bg-white" />
          <div className="h-[4.500px] rounded-full bg-white" />
        </div>
        <span className="ml-[38px] text-[24px] font-medium text-[#f5f5f5]">GCCD IN</span>
        <div className="ml-auto flex size-[45px] items-center justify-center rounded-full bg-[#ff9800]">
          <Person size={39} />
        </div>
      </header>
      <div className="flex flex-1">
        <Sidebar />
        <Poll />
      </div>
      <Downloads />
      <Taskbar />
    </div>
  );
}
